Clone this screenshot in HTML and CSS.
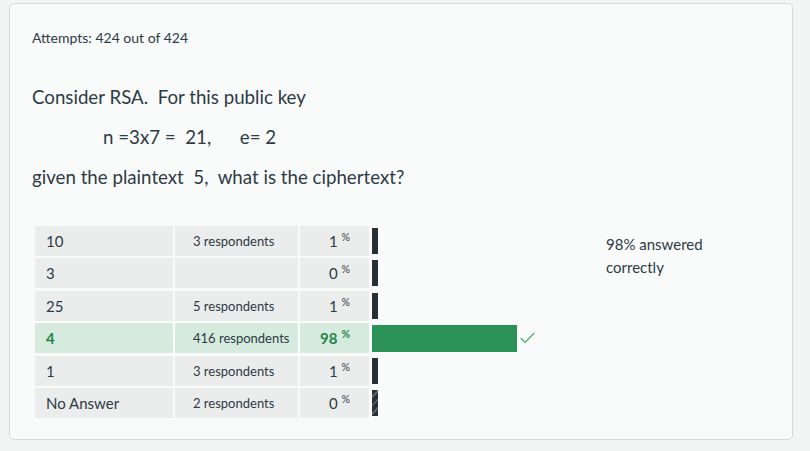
FILE: index.html
```html
<!DOCTYPE html>
<html>
<head>
<meta charset="utf-8">
<link rel="stylesheet" href="styles.css">
</head>
<body>
<div class="card">
  <p class="attempts">Attempts: 424 out of 424</p>
  <div class="question">
    <p class="q-line">Consider RSA.&nbsp; For this public key</p>
    <p class="q-line q-indent">n =3x7 =&nbsp; 21,&nbsp; &nbsp; &nbsp; e= 2</p>
    <p class="q-line">given the plaintext&nbsp; 5,&nbsp; what is the ciphertext?</p>
  </div>
  <div class="results">
    <div class="grid">
      <div class="cell answer">10</div>
      <div class="cell count">3 respondents</div>
      <div class="cell pct">1<sup>%</sup></div>
      <div class="barcell"><div class="bar dark" style="width:6px"></div></div>

      <div class="cell answer">3</div>
      <div class="cell count"></div>
      <div class="cell pct">0<sup>%</sup></div>
      <div class="barcell"><div class="bar dark" style="width:6px"></div></div>

      <div class="cell answer">25</div>
      <div class="cell count">5 respondents</div>
      <div class="cell pct">1<sup>%</sup></div>
      <div class="barcell"><div class="bar dark" style="width:6px"></div></div>

      <div class="cell answer correct">4</div>
      <div class="cell count correct-bg">416 respondents</div>
      <div class="cell pct correct">98<sup>%</sup></div>
      <div class="barcell">
        <div class="bar green" style="width:145px"></div>
        <svg class="check" width="15" height="12" viewBox="0 0 15 12"><polyline points="0.8,6 5,10.4 14.3,1" fill="none" stroke="#4aa86b" stroke-width="1.2"/></svg>
      </div>

      <div class="cell answer">1</div>
      <div class="cell count">3 respondents</div>
      <div class="cell pct">1<sup>%</sup></div>
      <div class="barcell"><div class="bar dark" style="width:6px"></div></div>

      <div class="cell answer">No Answer</div>
      <div class="cell count">2 respondents</div>
      <div class="cell pct">0<sup>%</sup></div>
      <div class="barcell"><div class="bar striped" style="width:6px"></div></div>
    </div>
    <div class="summary">98% answered<br>correctly</div>
  </div>
</div>
</body>
</html>
```

FILE: styles.css
```css
html, body {
  margin: 0;
  padding: 0;
  background: #f3f4f4;
  font-family: Lato, "Open Sans", "Liberation Sans", sans-serif;
  color: #2d3b45;
}

.card {
  box-sizing: border-box;
  margin: 3px 0 0 9px;
  width: 784px;
  height: 437px;
  background: #f9fafa;
  border: 1px solid #d6d9db;
  border-radius: 5px;
  padding: 26px 22px 0 22px;
}

.attempts {
  margin: 0;
  font-size: 14px;
  line-height: 16px;
}

.question {
  margin-top: 39px;
}

.q-line {
  margin: 0 0 16px 0;
  font-size: 18.7px;
  line-height: 24px;
}

.q-indent {
  padding-left: 71px;
}

.results {
  display: flex;
  margin-top: 37px;
  margin-left: 3px;
}

.grid {
  display: grid;
  grid-template-columns: 138px 123px 69px 235px;
  grid-auto-rows: 30px;
  column-gap: 2px;
  row-gap: 2.4px;
}

.cell {
  background: #ebecec;
  font-size: 15px;
  display: flex;
  align-items: center;
  white-space: nowrap;
}

.answer {
  padding-left: 11px;
}

.count {
  padding-left: 18px;
  font-size: 13px;
}

.pct {
  justify-content: flex-end;
  padding-right: 19px;
}

.pct sup {
  font-size: 10.5px;
  margin-left: 4px;
  position: relative;
  top: -4px;
}

.correct {
  background: #d6ebdd;
  color: #23854a;
  font-weight: 700;
}

.correct-bg {
  background: #d6ebdd;
}

.barcell {
  display: flex;
  align-items: center;
  padding-left: 1px;
}

.bar {
  height: 26px;
}

.bar.dark {
  background: #263036;
}

.bar.green {
  height: 27px;
  background: #2a9257;
}

.bar.striped {
  background: repeating-linear-gradient(135deg, #263036 0 4px, #5a6166 4px 6px);
}

.check {
  margin-left: 3px;
}

.summary {
  margin-top: 7px;
  font-size: 15px;
  line-height: 23px;
}
```
